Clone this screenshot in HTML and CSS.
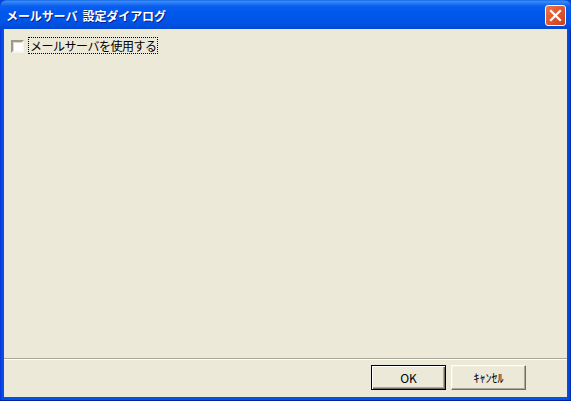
FILE: index.html
```html
<!DOCTYPE html>
<html lang="ja">
<head>
<meta charset="utf-8">
<title>メールサーバ 設定ダイアログ</title>
<link rel="stylesheet" href="styles.css">
</head>
<body>
<div class="window">
  <div class="titlebar">
    <span class="title">メールサーバ&nbsp;&nbsp;設定ダイアログ</span>
    <button class="close" aria-label="閉じる">
      <svg width="13" height="13" viewBox="0 0 13 13"><path d="M2 2 L11 11 M11 2 L2 11" stroke="#fff" stroke-width="2.2" stroke-linecap="square"/></svg>
    </button>
  </div>
  <div class="frame">
    <div class="client">
      <div class="content">
        <label class="check">
          <span class="box"></span>
          <span class="label">メールサーバを使用する</span>
        </label>
      </div>
      <div class="separator"></div>
      <div class="footer">
        <button class="btn default">OK</button>
        <button class="btn">ｷｬﾝｾﾙ</button>
      </div>
    </div>
  </div>
</div>
</body>
</html>
```
FILE: styles.css
```css
html, body {
  margin: 0;
  padding: 0;
  width: 571px;
  height: 401px;
  overflow: hidden;
}
body {
  font-family: "Noto Sans CJK JP", "DejaVu Sans", sans-serif;
  font-size: 12px;
}
.window {
  width: 571px;
  height: 401px;
  display: flex;
  flex-direction: column;
  background: #0842d6;
}
.titlebar {
  height: 29px;
  flex: none;
  display: flex;
  align-items: center;
  justify-content: space-between;
  padding: 0 5px 0 6px;
  box-sizing: border-box;
  border-radius: 7px 7px 0 0;
  background: linear-gradient(to bottom,
    #0a5ed8 0px, #3a8cf5 1px, #2a7cf8 3px, #0b5fee 6px,
    #0058ee 12px, #0055e8 20px, #0050e0 25px, #0046d0 29px);
}
.title {
  color: #fff;
  font-weight: bold;
  font-size: 12px;
  letter-spacing: -0.1px;
  padding-top: 2px;
  text-shadow: 1px 1px 0 #0a1e8c;
}
.close {
  width: 21px;
  height: 21px;
  margin-top: 2px;
  padding: 0;
  border: 1px solid #fff;
  border-radius: 3px;
  background: linear-gradient(135deg, #e9774e 0%, #e05a35 45%, #c7401c 100%);
  display: flex;
  align-items: center;
  justify-content: center;
  box-sizing: border-box;
}
.frame {
  flex: 1;
  display: flex;
  padding: 0 4px 4px 4px;
  background: linear-gradient(to right, #0831d9 0px, #0a4be8 2px, #0054e3 4px, #0054e3 calc(100% - 4px), #0a3ad0 calc(100% - 1px), #001ea0 100%);
  box-shadow: inset 0 -1px 0 #001ea0;
}
.client {
  flex: 1;
  display: flex;
  flex-direction: column;
  background: #ece9d8;
}
.content {
  flex: 1;
  padding: 8px 0 0 7px;
}
.check {
  display: inline-flex;
  align-items: center;
  gap: 4px;
  color: #000;
}
.box {
  width: 13px;
  height: 13px;
  box-sizing: border-box;
  background: #fff;
  border-style: solid;
  border-width: 2px;
  border-color: #9d9a8c #f6f5ee #f6f5ee #9d9a8c;
  box-shadow: inset 1px 1px 0 #dcd9cb;
  margin-top: 2px;
}
.label {
  border: 1px dotted #000;
  padding: 0 1px;
  line-height: 15px;
  letter-spacing: -0.5px;
}
.separator {
  height: 1px;
  background: #aca899;
  border-bottom: 1px solid #fff;
}
.footer {
  display: flex;
  justify-content: flex-end;
  gap: 5px;
  padding: 5px 41px 7px 0;
}
.btn {
  width: 75px;
  height: 25px;
  box-sizing: border-box;
  font-family: inherit;
  font-size: 12px;
  color: #000;
  background: #ece9d8;
  border: 1px solid;
  border-color: #fff #716f64 #716f64 #fff;
  box-shadow: inset -1px -1px 0 #aca899, inset 1px 1px 0 #f1efe2;
  padding: 0;
}
.btn.default {
  border: 1px solid #000;
  box-shadow: inset 1px 1px 0 #fff, inset -1px -1px 0 #716f64, inset -2px -2px 0 #aca899;
}
```
